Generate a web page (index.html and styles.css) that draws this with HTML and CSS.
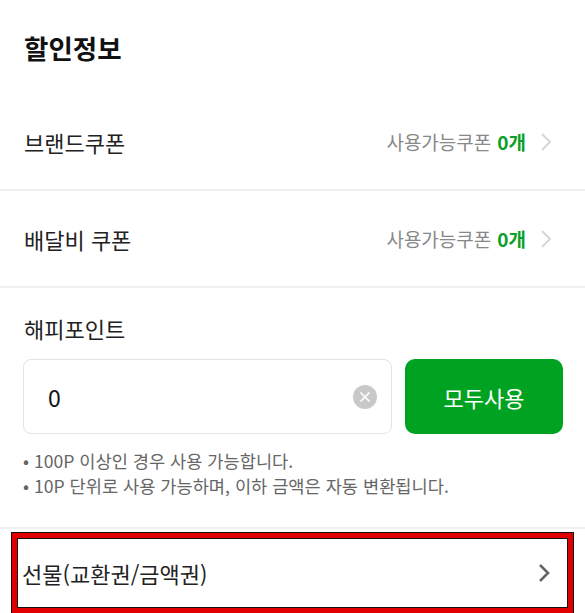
FILE: index.html
```html
<!DOCTYPE html>
<html lang="ko">
<head>
  <meta charset="UTF-8" />
  <meta name="viewport" content="width=device-width, initial-scale=1.0"/>
  <title>할인정보</title>
  <link rel="stylesheet" href="styles.css">
</head>
<body>
  <div class="title">할인정보</div>
  <div class="row">
    <span class="row-label">브랜드쿠폰</span>
    <span class="row-info">사용가능쿠폰 <b class="count">0개</b>
      <svg class="chev light" width="12" height="20" viewBox="0 0 12 20"><path d="M2 2 L10 10 L2 18" fill="none" stroke="currentColor" stroke-width="2"/></svg>
    </span>
  </div>
  <div class="divider"></div>
  <div class="row">
    <span class="row-label">배달비 쿠폰</span>
    <span class="row-info">사용가능쿠폰 <b class="count">0개</b>
      <svg class="chev light" width="12" height="20" viewBox="0 0 12 20"><path d="M2 2 L10 10 L2 18" fill="none" stroke="currentColor" stroke-width="2"/></svg>
    </span>
  </div>
  <div class="divider"></div>
  <div class="point">
    <div class="point-label">해피포인트</div>
    <div class="point-form">
      <div class="point-input">
        <span class="point-value">0</span>
        <span class="clear">
          <svg width="24" height="24" viewBox="0 0 24 24"><circle cx="12" cy="12" r="12" fill="#c8c8c8"/><path d="M7.5 7.5 L16.5 16.5 M16.5 7.5 L7.5 16.5" stroke="#fff" stroke-width="1.6"/></svg>
        </span>
      </div>
      <button class="use-all">모두사용</button>
    </div>
    <ul class="notes">
      <li>100P 이상인 경우 사용 가능합니다.</li>
      <li>10P 단위로 사용 가능하며, 이하 금액은 자동 변환됩니다.</li>
    </ul>
  </div>
  <div class="divider"></div>
  <div class="gift">
    <span class="gift-label">선물(교환권/금액권)</span>
    <svg class="chev dark" width="14" height="22" viewBox="0 0 14 22"><path d="M3 3 L11 11 L3 19" fill="none" stroke="currentColor" stroke-width="2.6"/></svg>
  </div>
</body>
</html>
```

FILE: styles.css
```css
body {
  font-family: 'Noto Sans CJK KR', 'Noto Sans', sans-serif;
  background-color: #fff;
  margin: 0;
  padding: 0;
  color: #222;
}
.title {
  height: 94px;
  display: flex;
  align-items: center;
  padding: 0 24px;
  font-size: 26.5px;
  font-weight: bold;
  color: #111;
}
.row {
  height: 95px;
  display: flex;
  align-items: center;
  justify-content: space-between;
  padding: 0 33px 0 24px;
}
.row-label {
  font-size: 22px;
  color: #222;
}
.row-info {
  display: flex;
  align-items: center;
  gap: 6px;
  font-size: 19px;
  color: #888;
}
.count {
  color: #0aa028;
  font-weight: bold;
  margin-right: 8px;
}
.chev.light {
  color: #d6d6d6;
}
.chev.dark {
  color: #666;
}
.divider {
  height: 2px;
  background-color: #f0f0f0;
}
.point {
  padding: 0 22px 0 23px;
  height: 239px;
  box-sizing: border-box;
}
.point-label {
  font-size: 22px;
  padding: 26px 0 0 1px;
  line-height: 28px;
}
.point-form {
  display: flex;
  gap: 13px;
  margin-top: 17px;
}
.point-input {
  flex: 1;
  height: 75px;
  box-sizing: border-box;
  border: 1px solid #e4e4e4;
  border-radius: 8px;
  display: flex;
  align-items: center;
  justify-content: space-between;
  padding: 0 14px 0 24px;
}
.point-value {
  font-size: 23px;
  color: #111;
}
.clear svg {
  display: block;
}
.use-all {
  width: 158px;
  height: 75px;
  border: none;
  border-radius: 10px;
  background-color: #00a321;
  color: #fff;
  font-family: inherit;
  font-size: 22px;
}
.notes {
  list-style: none;
  margin: 14px 0 0;
  padding: 0;
  font-size: 17.6px;
  color: #666;
  line-height: 25px;
}
.notes li::before {
  content: "• ";
}
.gift {
  margin: 4px 12px 0 12px;
  height: 80px;
  box-sizing: border-box;
  border: 5px solid #e10000;
  outline: 1px solid #111;
  box-shadow: inset 0 0 0 1px #111;
  display: flex;
  align-items: center;
  justify-content: space-between;
  padding: 0 17px 0 5px;
}
.gift-label {
  font-size: 22px;
  color: #222;
}
```
